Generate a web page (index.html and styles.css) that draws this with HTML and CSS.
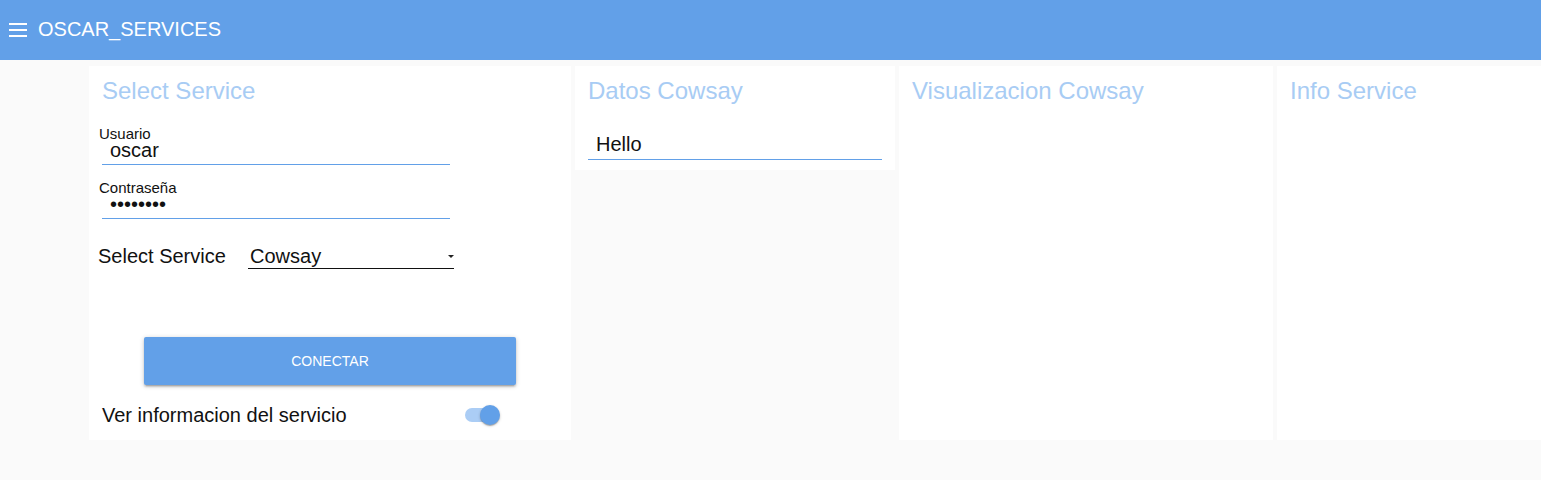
FILE: index.html
```html
<!DOCTYPE html>
<html lang="es">
<head>
<meta charset="utf-8">
<title>OSCAR_SERVICES</title>
<link rel="stylesheet" href="styles.css">
</head>
<body>
<header class="appbar">
  <svg class="menu-icon" width="18" height="14" viewBox="0 0 18 14" aria-hidden="true">
    <rect x="0" y="0" width="18" height="2" fill="#fff"/>
    <rect x="0" y="6" width="18" height="2" fill="#fff"/>
    <rect x="0" y="12" width="18" height="2" fill="#fff"/>
  </svg>
  <span class="brand">OSCAR_SERVICES</span>
</header>
<main class="board">
  <section class="panel panel-login">
    <h2 class="panel-title">Select Service</h2>
    <div class="field">
      <div class="field-label">Usuario</div>
      <div class="field-input">oscar</div>
    </div>
    <div class="field field-second">
      <div class="field-label">Contraseña</div>
      <div class="field-input field-pass">••••••••</div>
    </div>
    <div class="select-row">
      <span class="select-label">Select Service</span>
      <div class="select-box">
        <span>Cowsay</span>
        <span class="select-arrow"></span>
      </div>
    </div>
    <div class="btn-row">
      <button class="btn-connect" type="button">CONECTAR</button>
    </div>
    <div class="switch-row">
      <span class="switch-label">Ver informacion del servicio</span>
      <span class="switch">
        <span class="switch-track"></span>
        <span class="switch-thumb"></span>
      </span>
    </div>
  </section>
  <section class="panel panel-data">
    <h2 class="panel-title">Datos Cowsay</h2>
    <div class="data-input">Hello</div>
  </section>
  <section class="panel panel-vis">
    <h2 class="panel-title">Visualizacion Cowsay</h2>
  </section>
  <section class="panel panel-info">
    <h2 class="panel-title">Info Service</h2>
  </section>
</main>
</body>
</html>
```
FILE: styles.css
```css
html, body {
  margin: 0;
  padding: 0;
}
body {
  background: #fafafa;
  font-family: "Liberation Sans", Arial, sans-serif;
  color: #111;
  width: 1541px;
  height: 480px;
  overflow: hidden;
}
.appbar {
  height: 60px;
  background: #62a0e8;
  display: flex;
  align-items: center;
  padding-left: 9px;
  box-sizing: border-box;
}
.menu-icon {
  display: block;
}
.brand {
  color: #fff;
  font-size: 20px;
  margin-left: 11px;
  line-height: 20px;
  margin-top: -3px;
}
.board {
  display: flex;
  align-items: flex-start;
  gap: 4px;
  padding-left: 89px;
  padding-top: 6px;
}
.panel {
  background: #fff;
  box-sizing: border-box;
  flex-shrink: 0;
  padding: 12px 13px 0;
}
.panel-login { width: 482px; height: 374px; }
.panel-data { width: 320px; height: 104px; }
.panel-vis { width: 374px; height: 374px; }
.panel-info { width: 264px; height: 374px; }
.panel-title {
  margin: 0;
  font-weight: normal;
  font-size: 24px;
  line-height: 26px;
  color: #a8ccf4;
}
.field {
  margin-top: 23px;
  margin-left: -3px;
}
.field-second {
  margin-top: 16px;
}
.field-label {
  font-size: 15px;
  line-height: 14px;
}
.field-input {
  width: 348px;
  box-sizing: border-box;
  margin-left: 3px;
  padding: 0 0 5px 8px;
  font-size: 20px;
  line-height: 18px;
  border-bottom: 1px solid #62a0e8;
}
.select-row {
  display: flex;
  align-items: baseline;
  margin-top: 26px;
  margin-left: -4px;
}
.select-label {
  font-size: 20px;
  line-height: 22px;
  width: 150px;
}
.select-box {
  width: 206px;
  box-sizing: border-box;
  display: flex;
  align-items: center;
  justify-content: space-between;
  padding: 0 0 1px 2px;
  font-size: 20px;
  line-height: 22px;
  border-bottom: 1px solid #111;
}
.select-arrow {
  width: 0;
  height: 0;
  border-left: 3.5px solid transparent;
  border-right: 3.5px solid transparent;
  border-top: 3.5px solid #222;
}
.btn-row {
  display: flex;
  justify-content: center;
  margin-top: 68px;
}
.btn-connect {
  width: 372px;
  height: 48px;
  border: 0;
  border-radius: 2px;
  background: #62a0e8;
  color: #fff;
  font-family: "Liberation Sans", Arial, sans-serif;
  font-size: 14px;
  padding: 0;
  box-shadow: 0 1px 5px rgba(0,0,0,0.2), 0 2px 2px rgba(0,0,0,0.14), 0 3px 1px -2px rgba(0,0,0,0.12);
}
.switch-row {
  display: flex;
  align-items: center;
  margin-top: 19px;
}
.switch-label {
  font-size: 20px;
  line-height: 22px;
  width: 363px;
}
.switch {
  position: relative;
  width: 36px;
  height: 20px;
  display: block;
}
.switch-track {
  position: absolute;
  left: 0;
  top: 3px;
  width: 34px;
  height: 14px;
  border-radius: 7px;
  background: #abcdf5;
}
.switch-thumb {
  position: absolute;
  left: 15px;
  top: 0;
  width: 20px;
  height: 20px;
  border-radius: 50%;
  background: #62a0e8;
  box-shadow: 0 1px 3px rgba(0,0,0,0.2), 0 1px 1px rgba(0,0,0,0.14), 0 2px 1px -1px rgba(0,0,0,0.12);
}
.data-input {
  margin-top: 29px;
  width: 294px;
  box-sizing: border-box;
  padding: 0 0 4px 8px;
  font-size: 20px;
  line-height: 22px;
  border-bottom: 1px solid #62a0e8;
}
```
